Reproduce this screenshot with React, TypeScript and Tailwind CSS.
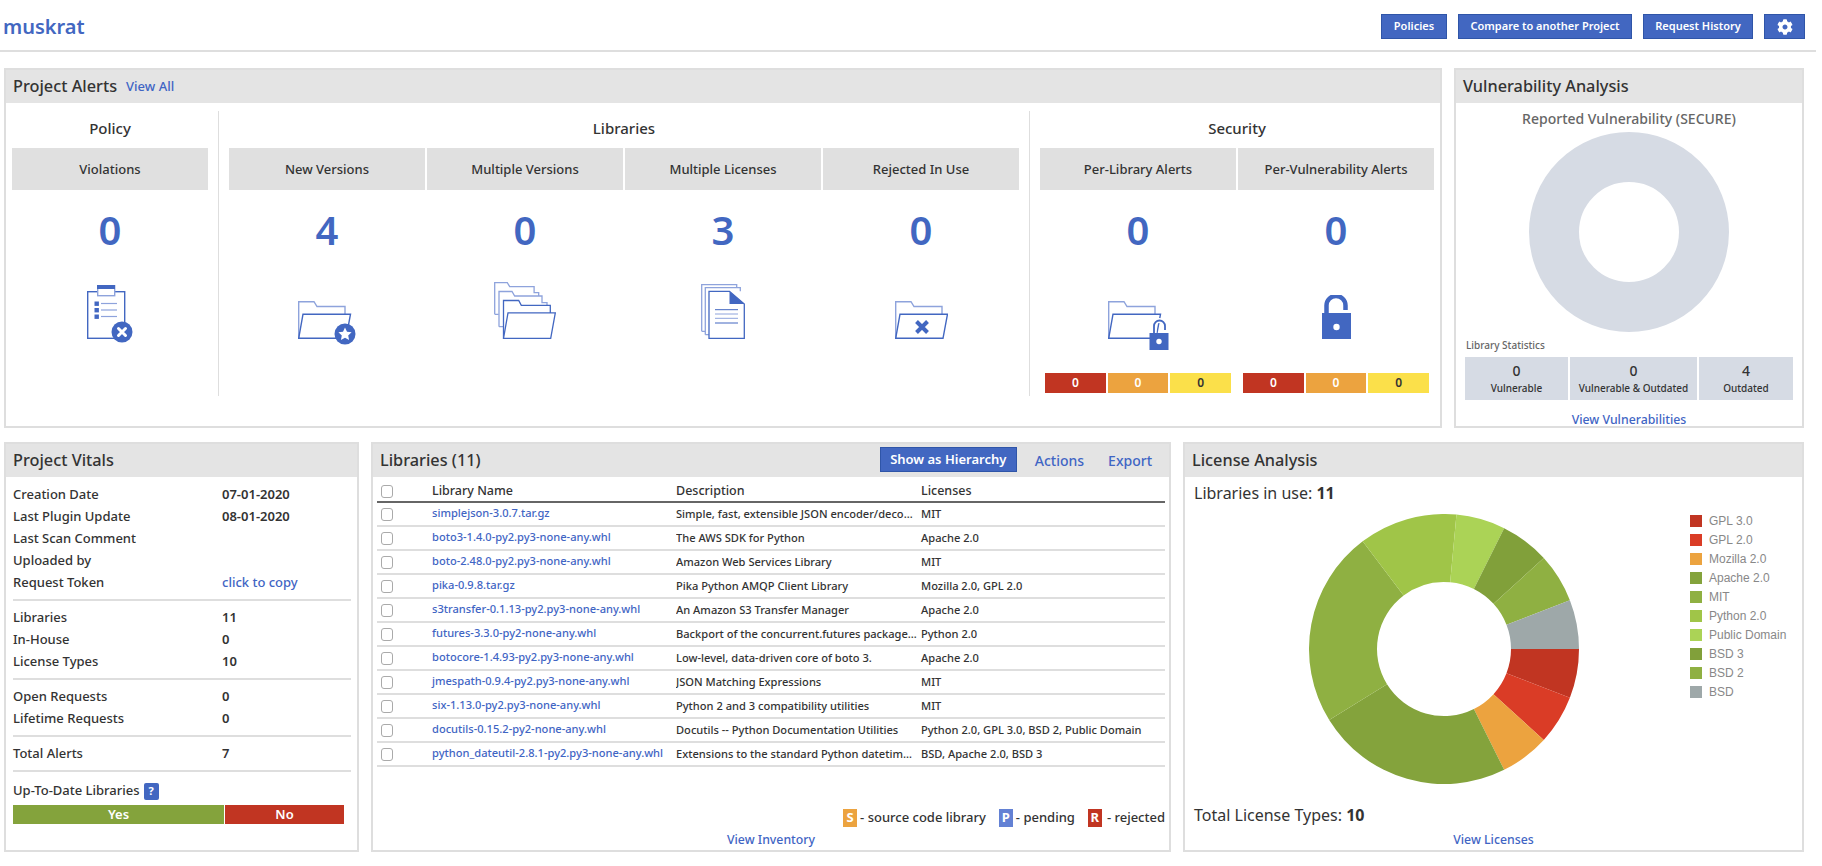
import React from "react";
import { FaCog } from "react-icons/fa";

const B = "#4267c1";
const L = "#8ea3dc";

function Panel({ title, extra, className, children }: { title: string; extra?: React.ReactNode; className: string; children: React.ReactNode }) {
  return (
    <div className={"border-2 border-[#dedede] flex flex-col shrink-0 " + className}>
      <div className="h-[33px] bg-[#e4e4e4] flex items-center pl-[7px] pr-[7px] shrink-0">
        <span className="text-[16.3px] font-medium text-[#333]">{title}</span>
        {extra}
      </div>
      {children}
    </div>
  );
}

const FolderShape = ({ dx = 0 }: { dx?: number }) => (
  <g fill="none" strokeWidth="1.4" transform={`translate(${dx} 0)`}>
    <path d="M.7 37.3V.7H16l3 4.8h28V13" stroke={L} />
    <path d="M5 13.2H52.5L48 37.3H.7Z" stroke={B} />
  </g>
);

const ClipIcon = () => (
  <svg width="46" height="58" viewBox="0 0 46 58" className="-mb-[4px]">
    <rect x=".7" y="6.7" width="37" height="46.6" fill="#fff" stroke={B} strokeWidth="1.4" />
    <rect x="10.7" y=".7" width="17" height="10" fill="#fff" stroke={L} strokeWidth="1.4" />
    <rect x="10" y="0" width="18" height="4" fill={B} />
    {[16.5, 23, 29.5].map((y) => (
      <g key={y}>
        <rect x="7.5" y={y} width="4.4" height="4.4" fill={B} />
        <line x1="14" x2="30" y1={y + 2} y2={y + 2} stroke={L} strokeWidth="1.2" />
      </g>
    ))}
    <circle cx="35" cy="47" r="10.5" fill={B} />
    <path d="M31.5 43.5l7 7m0-7l-7 7" stroke="#fff" strokeWidth="3" strokeLinecap="round" />
  </svg>
);

const StarFolder = () => (
  <svg width="58" height="44" viewBox="0 0 58 44" className="-mb-[6px]">
    <FolderShape />
    <circle cx="47" cy="33" r="10.5" fill={B} />
    <path d="M47 26.5l2 4.2 4.6.6-3.4 3.2.9 4.6-4.1-2.3-4.1 2.3.9-4.6-3.4-3.2 4.6-.6Z" fill="#fff" />
  </svg>
);

const MultiFolder = () => (
  <svg width="62" height="57" viewBox="0 0 62 57" fill="none" strokeWidth="1.3">
    <path d="M.7 32.3V.7h12.6l2.4 4h24.4v6h4.6v3.4M.7 32.3h4" stroke={L} />
    <path d="M5 44.7V9.5h13l2.7 4.5H48v6.7h5v2.8M5 44.7h4.3" stroke={L} />
    <path d="M9.5 56V18.5h15.2l2.6 4.8h29V31" stroke={B} />
    <path d="M14 30.9h47.3L56.7 56.3H9.5Z" stroke={B} fill="#fff" />
  </svg>
);

const DocsIcon = () => (
  <svg width="44" height="55" viewBox="0 0 44 55" fill="none" strokeWidth="1.3">
    <path d="M.7 47.3V.7h35V3M.7 47.3h3.5" stroke={L} />
    <path d="M4.3 50.7V3.7h35v3.6M4.3 50.7h3.5" stroke={L} />
    <path d="M8 7.3h20.5L43.3 20v34.3H8Z" stroke={B} fill="#fff" />
    <path d="M28.5 7.3L43.3 20H28.5Z" fill={B} />
    {[25.7, 30, 34.3, 39].map((y) => (
      <line key={y} x1="14" x2="37" y1={y} y2={y} stroke={y === 30 || y === 34.3 ? L : B} strokeWidth="1" />
    ))}
  </svg>
);

const XFolder = () => (
  <svg width="53" height="38" viewBox="0 0 53 38">
    <FolderShape />
    <path d="M21.5 20.5l11 11m0-11l-11 11" stroke={B} strokeWidth="4" />
  </svg>
);

const LockFolder = () => (
  <svg width="61" height="49" viewBox="0 0 61 49" className="-mb-[11px]">
    <FolderShape />
    <path d="M46 33V25a5.5 5.5 0 0 1 11 0v4" fill="none" stroke="#fff" strokeWidth="5" />
    <path d="M46 33V25a5.5 5.5 0 0 1 11 0v4" fill="none" stroke={B} strokeWidth="1.8" />
    <rect x="41.5" y="32" width="19" height="17" fill={B} />
    <circle cx="51" cy="40.5" r="2.7" fill="#fff" />
  </svg>
);

const Unlock = () => (
  <svg width="29" height="44" viewBox="0 0 29 44">
    <path d="M4.5 19V10.5a9.5 9.5 0 0 1 19 0V15" fill="none" stroke={B} strokeWidth="4.5" />
    <rect x="0" y="18" width="29" height="26" fill={B} />
    <circle cx="14.5" cy="32" r="3.2" fill="#fff" />
  </svg>
);

function Alert({ label, value, icon, sev }: { label: string; value: number; icon: React.ReactNode; sev?: boolean }) {
  return (
    <div className="w-[196px] flex flex-col items-center">
      <div className="w-full h-[42px] pt-[2px] bg-[#e0e0e0] flex items-center justify-center text-[13px] font-medium text-[#333]">{label}</div>
      <div className="h-[80px] flex items-center text-[40px] font-semibold text-[#4267c1] leading-none">{value}</div>
      <div className="h-[69px] flex items-end justify-center">{icon}</div>
      {sev && (
        <div className="flex gap-[2px] mt-[34px] w-[186px] h-[20px] text-[12px] font-semibold">
          <div className="flex-1 bg-[#c13522] text-white flex items-center justify-center">0</div>
          <div className="flex-1 bg-[#eca33f] text-white flex items-center justify-center">0</div>
          <div className="flex-1 bg-[#fbe04a] text-[#333] flex items-center justify-center">0</div>
        </div>
      )}
    </div>
  );
}

function Section({ title, children }: { title: string; children: React.ReactNode }) {
  return (
    <div className="flex flex-col">
      <div className="h-[34px] mb-[3px] flex items-center justify-center text-[15px] font-medium text-[#333]">{title}</div>
      <div className="flex gap-[2px]">{children}</div>
    </div>
  );
}

const Vsep = () => <div className="w-[1px] bg-[#dedede] h-[285px] mx-[10px]" />;

function Vital({ k, v, link }: { k: string; v?: string; link?: boolean }) {
  return (
    <div className="h-[22px] flex items-center text-[13px] text-[#333] font-medium">
      <span className="w-[209px]">{k}</span>
      <span className={link ? "text-[#3f65c4]" : "font-semibold"}>{v}</span>
    </div>
  );
}

const Rule = ({ mt }: { mt: string }) => <div className={"h-[2px] bg-[#dedede] " + mt} />;

const rows = [
  ["simplejson-3.0.7.tar.gz", "Simple, fast, extensible JSON encoder/decoder for Python", "MIT"],
  ["boto3-1.4.0-py2.py3-none-any.whl", "The AWS SDK for Python", "Apache 2.0"],
  ["boto-2.48.0-py2.py3-none-any.whl", "Amazon Web Services Library", "MIT"],
  ["pika-0.9.8.tar.gz", "Pika Python AMQP Client Library", "Mozilla 2.0, GPL 2.0"],
  ["s3transfer-0.1.13-py2.py3-none-any.whl", "An Amazon S3 Transfer Manager", "Apache 2.0"],
  ["futures-3.3.0-py2-none-any.whl", "Backport of the concurrent.futures package from Python 3", "Python 2.0"],
  ["botocore-1.4.93-py2.py3-none-any.whl", "Low-level, data-driven core of boto 3.", "Apache 2.0"],
  ["jmespath-0.9.4-py2.py3-none-any.whl", "JSON Matching Expressions", "MIT"],
  ["six-1.13.0-py2.py3-none-any.whl", "Python 2 and 3 compatibility utilities", "MIT"],
  ["docutils-0.15.2-py2-none-any.whl", "Docutils -- Python Documentation Utilities", "Python 2.0, GPL 3.0, BSD 2, Public Domain"],
  ["python_dateutil-2.8.1-py2.py3-none-any.whl", "Extensions to the standard Python datetime module", "BSD, Apache 2.0, BSD 3"],
];

const licenses: [string, string, number][] = [
  ["GPL 3.0", "#c13522", 1],
  ["GPL 2.0", "#da3c26", 1],
  ["Mozilla 2.0", "#eca33f", 1],
  ["Apache 2.0", "#84a33c", 4],
  ["MIT", "#8fb042", 4],
  ["Python 2.0", "#a0c548", 2],
  ["Public Domain", "#abd356", 1],
  ["BSD 3", "#81a03a", 1],
  ["BSD 2", "#8fb042", 1],
  ["BSD", "#9ea8a9", 1],
];

function LicenseDonut() {
  const R = 135, r = 67, c = 135;
  const total = licenses.reduce((s, l) => s + l[2], 0);
  let acc = 0;
  const pt = (rad: number, a: number) => `${(c + rad * Math.cos(a)).toFixed(2)} ${(c + rad * Math.sin(a)).toFixed(2)}`;
  return (
    <svg width="270" height="270" viewBox="0 0 270 270" className="mt-[3px] shrink-0">
      {licenses.map(([name, color, n]) => {
        const a0 = (acc / total) * Math.PI * 2;
        acc += n;
        const a1 = (acc / total) * Math.PI * 2;
        const large = a1 - a0 > Math.PI ? 1 : 0;
        return (
          <path
            key={name}
            fill={color}
            d={`M${pt(R, a0)}A${R} ${R} 0 ${large} 1 ${pt(R, a1)}L${pt(r, a1)}A${r} ${r} 0 ${large} 0 ${pt(r, a0)}Z`}
          />
        );
      })}
    </svg>
  );
}

const Stat = ({ n, l, w }: { n: number; l: string; w: string }) => (
  <div className={"h-[43px] bg-[#d6dbe4] flex flex-col items-center justify-center text-[#333] " + w}>
    <div className="text-[14px] font-medium leading-[20px] -mt-[1px]">{n}</div>
    <div className="text-[10px] font-medium leading-[15px]">{l}</div>
  </div>
);

const Btn = ({ children, w }: { children: React.ReactNode; w: string }) => (
  <button className={"h-[25px] bg-[#4267c1] border border-[#2f55a8] text-white text-[11px] font-semibold flex items-center justify-center " + w}>{children}</button>
);

const Badge = ({ t, c }: { t: string; c: string }) => (
  <span className={"w-[14px] h-[18px] text-white text-[13px] font-bold flex items-center justify-center " + c}>{t}</span>
);

const Check = () => (
  <div className="w-[55px] pl-[4px] flex items-center">
    <input type="checkbox" className="m-0 appearance-none w-[12px] h-[13px] bg-white border border-[#aaa] rounded-[3px]" />
  </div>
);

export default function App() {
  return (
    <div className="w-[1816px] h-[866px] bg-white font-['Noto_Sans',sans-serif] overflow-hidden">
      <header className="h-[52px] border-b-2 border-[#dedede] flex items-start justify-between pt-[14px] pl-[3px] pr-[11px]">
        <h1 className="text-[20px] leading-[26px] font-semibold text-[#4267c1]">muskrat</h1>
        <div className="flex gap-[11px]">
          <Btn w="w-[66px]">Policies</Btn>
          <Btn w="w-[174px]">Compare to another Project</Btn>
          <Btn w="w-[110px]">Request History</Btn>
          <Btn w="w-[41px]"><FaCog size={16} /></Btn>
        </div>
      </header>

      <div className="flex gap-[12px] ml-[4px] mt-[16px]">
        <Panel
          title="Project Alerts"
          className="w-[1438px] h-[360px]"
          extra={<span className="ml-[9px] pt-[1px] text-[13px] font-medium text-[#3f65c4]">View All</span>}
        >
          <div className="flex mt-[8px] pl-[6px]">
            <Section title="Policy">
              <Alert label="Violations" value={0} icon={<ClipIcon />} />
            </Section>
            <Vsep />
            <Section title="Libraries">
              <Alert label="New Versions" value={4} icon={<StarFolder />} />
              <Alert label="Multiple Versions" value={0} icon={<MultiFolder />} />
              <Alert label="Multiple Licenses" value={3} icon={<DocsIcon />} />
              <Alert label="Rejected In Use" value={0} icon={<XFolder />} />
            </Section>
            <Vsep />
            <Section title="Security">
              <Alert label="Per-Library Alerts" value={0} icon={<LockFolder />} sev />
              <Alert label="Per-Vulnerability Alerts" value={0} icon={<Unlock />} sev />
            </Section>
          </div>
        </Panel>

        <Panel title="Vulnerability Analysis" className="w-[350px] h-[360px]">
          <div className="flex flex-col items-center">
            <div className="h-[26px] w-full flex items-end justify-center text-[14px] font-medium text-[#666]">Reported Vulnerability (SECURE)</div>
            <svg width="200" height="200" viewBox="0 0 200 200" className="mt-[3px]">
              <circle cx="100" cy="100" r="75" fill="none" stroke="#d6dbe4" strokeWidth="50" />
            </svg>
            <div className="w-full pl-[10px] h-[25px] pt-[2px] flex items-center text-[10px] font-medium text-[#666]">Library Statistics</div>
            <div className="flex gap-[2px] self-start ml-[9px]">
              <Stat n={0} l="Vulnerable" w="w-[103px]" />
              <Stat n={0} l="Vulnerable & Outdated" w="w-[127px]" />
              <Stat n={4} l="Outdated" w="w-[94px]" />
            </div>
            <div className="mt-[11px] text-[12.3px] font-medium text-[#3f65c4] leading-[18px]">View Vulnerabilities</div>
          </div>
        </Panel>
      </div>

      <div className="flex gap-[12px] ml-[4px] mt-[14px]">
        <Panel title="Project Vitals" className="w-[355px] h-[410px]">
          <div className="pt-[7px] pl-[7px] pr-[6px]">
            <Vital k="Creation Date" v="07-01-2020" />
            <Vital k="Last Plugin Update" v="08-01-2020" />
            <Vital k="Last Scan Comment" />
            <Vital k="Uploaded by" />
            <Vital k="Request Token" v="click to copy" link />
            <Rule mt="mt-[5px] mb-[6px]" />
            <Vital k="Libraries" v="11" />
            <Vital k="In-House" v="0" />
            <Vital k="License Types" v="10" />
            <Rule mt="mt-[5px] mb-[6px]" />
            <Vital k="Open Requests" v="0" />
            <Vital k="Lifetime Requests" v="0" />
            <Rule mt="mt-[5px] mb-[6px]" />
            <Vital k="Total Alerts" v="7" />
            <Rule mt="mt-[5px]" />
            <div className="mt-[8px] h-[22px] flex items-center gap-[4px] text-[13px] font-medium text-[#333]">
              Up-To-Date Libraries
              <span className="w-[15px] h-[17px] rounded-[2px] bg-[#4267c1] text-white text-[11px] font-bold flex items-center justify-center">?</span>
            </div>
            <div className="mt-[3px] mr-[7px] h-[19px] flex text-white text-[13px] font-semibold">
              <div className="w-[212px] bg-[#84a33c] border-r border-white flex items-center justify-center">Yes</div>
              <div className="flex-1 bg-[#c13522] flex items-center justify-center">No</div>
            </div>
          </div>
        </Panel>

        <Panel
          title="Libraries (11)"
          className="w-[800px] h-[410px]"
          extra={
            <div className="ml-auto flex items-center text-[14px] font-medium text-[#3f65c4]">
              <Btn w="w-[137px] !text-[13px] mb-[2px]">Show as Hierarchy</Btn>
              <span className="ml-[18px]">Actions</span>
              <span className="ml-[24px] mr-[10px]">Export</span>
            </div>
          }
        >
          <div className="mx-[4px]">
            <div className="h-[26px] pt-[4px] border-b-2 border-[#666] flex items-center text-[12.5px] font-medium text-[#333]">
              <Check />
              <div className="w-[244px]">Library Name</div>
              <div className="w-[245px]">Description</div>
              <div>Licenses</div>
            </div>
            {rows.map(([n, d, l]) => (
              <div key={n} className="h-[24px] border-b-2 border-[#dedede] flex items-center text-[11.1px] font-medium text-[#333]">
                <Check />
                <div className="w-[244px] text-[#3f65c4] -mt-[2px]">{n}</div>
                <div className="w-[245px] pr-[3px] truncate">{d}</div>
                <div>{l}</div>
              </div>
            ))}
            <div className="mt-[42px] h-[18px] flex items-center justify-end text-[13px] font-medium text-[#333] whitespace-nowrap">
              <Badge t="S" c="bg-[#eca33f]" />
              <span className="ml-[3px]">- source code library</span>
              <Badge t="P" c="bg-[#6381d4] ml-[13px]" />
              <span className="ml-[3px]">- pending</span>
              <Badge t="R" c="bg-[#c13522] ml-[13px]" />
              <span className="ml-[5px]">- rejected</span>
            </div>
            <div className="mt-[4px] text-center text-[12.3px] font-medium text-[#3f65c4] leading-[18px]">View Inventory</div>
          </div>
        </Panel>

        <Panel title="License Analysis" className="w-[621px] h-[410px]">
          <div className="pl-[9px] pt-[5px] flex flex-col">
            <div className="h-[22px] flex items-center text-[16px] text-[#333]">
              Libraries in use:&nbsp;<b className="font-bold">11</b>
            </div>
            <div className="flex mt-[7px] ml-[115px]">
              <LicenseDonut />
              <div className="ml-[111px] flex flex-col">
                {licenses.map(([name, color]) => (
                  <div key={name} className="h-[19px] flex items-center gap-[7px] text-[12px] text-[#888] font-['Liberation_Sans',sans-serif] whitespace-nowrap">
                    <span className="w-[12px] h-[12px]" style={{ background: color }} />
                    {name}
                  </div>
                ))}
              </div>
            </div>
            <div className="mt-[20px] h-[22px] flex items-center text-[16px] text-[#333]">
              Total License Types:&nbsp;<b className="font-bold">10</b>
            </div>
            <div className="mt-[5px] -ml-[9px] text-center text-[12.3px] font-medium text-[#3f65c4] leading-[18px]">View Licenses</div>
          </div>
        </Panel>
      </div>
    </div>
  );
}
